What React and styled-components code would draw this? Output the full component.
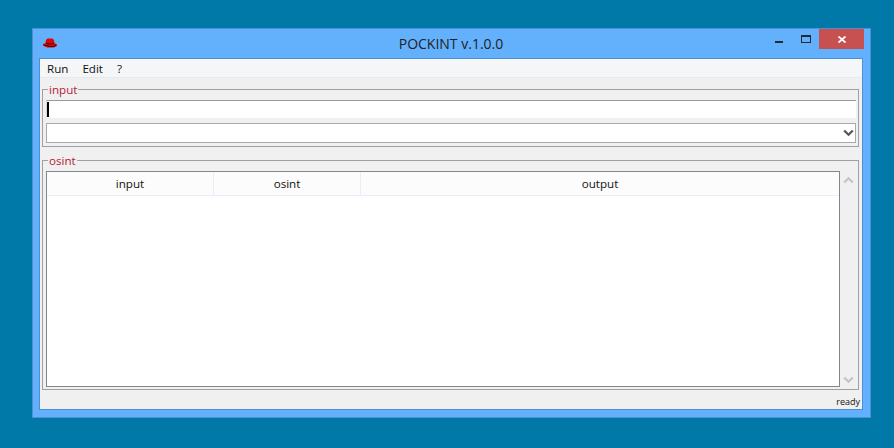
import styled, { createGlobalStyle } from "styled-components";

const Global = createGlobalStyle`
    html, body {
        margin: 0;
        padding: 0;
        width: 894px;
        height: 448px;
        overflow: hidden;
        background: #0078a8;
    }
`;

const UI_FONT = `"Open Sans", "Noto Sans", sans-serif`;

const columns = [
    { label: "input", width: 167 },
    { label: "osint", width: 147 },
    { label: "output", width: 478 },
];

export default function App() {
    return (
        <Desktop>
            <Global />
            <Window>
                <TitleBar>
                    <HatIcon />
                    <Title>POCKINT v.1.0.0</Title>
                    <Controls>
                        <MinimizeButton />
                        <MaximizeButton />
                        <CloseButton>
                            <svg width="8" height="7" viewBox="0 0 8 7">
                                <path d="M0.5 0.5 L7.5 6.5 M7.5 0.5 L0.5 6.5" stroke="#fff" strokeWidth="1.8" />
                            </svg>
                        </CloseButton>
                    </Controls>
                </TitleBar>
                <Client>
                    <MenuBar>
                        <MenuItem>Run</MenuItem>
                        <MenuItem>Edit</MenuItem>
                        <MenuItem>?</MenuItem>
                    </MenuBar>
                    <Body>
                        <InputGroup>
                            <GroupLabel>input</GroupLabel>
                            <TextField>
                                <Caret />
                            </TextField>
                            <Combo>
                                <Chevron $color="#555555" $down />
                            </Combo>
                        </InputGroup>
                        <OsintGroup>
                            <GroupLabel>osint</GroupLabel>
                            <TableRow>
                                <Table>
                                    <HeaderRow>
                                        {columns.map((c) => (
                                            <HeaderCell key={c.label} $width={c.width}>{c.label}</HeaderCell>
                                        ))}
                                    </HeaderRow>
                                </Table>
                                <ScrollBar>
                                    <Chevron $color="#c4c4c4" />
                                    <Chevron $color="#c4c4c4" $down />
                                </ScrollBar>
                            </TableRow>
                        </OsintGroup>
                    </Body>
                    <StatusBar>ready</StatusBar>
                </Client>
            </Window>
        </Desktop>
    );
}

function HatIcon() {
    return (
        <HatSvg width="14" height="10" viewBox="0 0 14 10">
            <path d="M4.5 0.5 H9.5 L11 2 L11.5 5 L14 6.5 V8 L11 9.5 H4 L0 7.5 V6 L2.5 5 L3 2 Z" fill="#d80808" />
            <path d="M3 4.5 L5 6 H9 L10.5 5 M1 7.5 L4 7.5 L6 8.5 H10 L13 7" fill="none" stroke="#4a0404" strokeWidth="1" />
        </HatSvg>
    );
}

function Chevron({ $color, $down }) {
    return (
        <svg width="11" height="8" viewBox="0 0 11 8">
            <path
                d={$down ? "M1.2 1.5 L5.5 5.8 L9.8 1.5" : "M1.2 6.5 L5.5 2.2 L9.8 6.5"}
                fill="none"
                stroke={$color}
                strokeWidth="2.2"
            />
        </svg>
    );
}

const Desktop = styled.div`
    width: 894px;
    height: 448px;
    padding: 28px 0 0 32px;
    box-sizing: border-box;
    background: #0078a8;
`;

const Window = styled.div`
    width: 839px;
    height: 390px;
    box-sizing: border-box;
    display: flex;
    flex-direction: column;
    background: #63b1fd;
    border: 1px solid #4d8fd0;
    padding: 0 7px 7px 6px;
`;

const TitleBar = styled.div`
    height: 29px;
    flex: none;
    display: flex;
    align-items: center;
    justify-content: center;
    position: relative;
`;

const HatSvg = styled.svg`
    position: absolute;
    left: 4px;
    top: 9px;
`;

const Title = styled.div`
    font-family: ${UI_FONT};
    font-size: 14px;
    color: #222222;
`;

const Controls = styled.div`
    position: absolute;
    right: -1px;
    top: 0;
    display: flex;
    align-items: flex-start;
`;

const MinimizeButton = styled.div`
    width: 8px;
    height: 2px;
    margin: 12px 18px 0 0;
    background: #1f2a36;
`;

const MaximizeButton = styled.div`
    width: 8px;
    height: 5px;
    box-sizing: content-box;
    margin: 6px 8px 0 0;
    border: 1px solid #1f2a36;
    border-top-width: 2px;
`;

const CloseButton = styled.div`
    width: 45px;
    height: 20px;
    background: #c75050;
    display: flex;
    align-items: center;
    justify-content: center;
`;

const Client = styled.div`
    flex: 1;
    min-height: 0;
    display: flex;
    flex-direction: column;
    background: #f0f0f0;
    border: 1px solid #4d8fd0;
`;

const MenuBar = styled.div`
    height: 19px;
    box-sizing: border-box;
    flex: none;
    display: flex;
    align-items: center;
    gap: 14px;
    padding: 1px 0 0 7px;
    background: #f5f6f7;
    border-bottom: 1px solid #e8e9ea;
    font-family: ${UI_FONT};
    font-size: 11.6px;
    color: #111111;
`;

const MenuItem = styled.span`
    line-height: 18px;
`;

const Body = styled.div`
    flex: 1;
    min-height: 0;
    display: flex;
    flex-direction: column;
    padding: 11px 3px 0 2px;
    gap: 13px;
`;

const Group = styled.div`
    position: relative;
    box-sizing: border-box;
    border: 1px solid #a0a0a0;
    padding: 10px 2px 2px 3px;
    display: flex;
    flex-direction: column;
`;

const InputGroup = styled(Group)`
    height: 58px;
    gap: 5px;
`;

const OsintGroup = styled(Group)`
    height: 230px;
`;

const GroupLabel = styled.span`
    position: absolute;
    left: 5px;
    top: -7px;
    padding: 0 1px;
    background: #f0f0f0;
    font-family: ${UI_FONT};
    font-size: 11.6px;
    line-height: 13px;
    color: #b52038;
`;

const TextField = styled.div`
    height: 18px;
    box-sizing: border-box;
    flex: none;
    display: flex;
    align-items: center;
    background: #ffffff;
    border-top: 1px solid #9a9a9a;
    border-left: 1px solid #d8d8d8;
`;

const Caret = styled.div`
    width: 2px;
    height: 15px;
    background: #000000;
`;

const Combo = styled.div`
    height: 20px;
    box-sizing: border-box;
    flex: none;
    display: flex;
    align-items: center;
    justify-content: flex-end;
    padding-right: 1px;
    background: #ffffff;
    border: 1px solid #a9a9a9;
`;

const TableRow = styled.div`
    flex: 1;
    min-height: 0;
    display: flex;
`;

const Table = styled.div`
    width: 794px;
    box-sizing: border-box;
    background: #ffffff;
    border: 1px solid #82878f;
`;

const HeaderRow = styled.div`
    height: 24px;
    display: flex;
    box-sizing: border-box;
    background: #fcfcfc;
    border-bottom: 1px solid #e6eff9;
`;

const HeaderCell = styled.div`
    width: ${(p) => p.$width}px;
    box-sizing: border-box;
    flex: none;
    display: flex;
    align-items: center;
    justify-content: center;
    border-right: 1px solid #e6eff9;
    font-family: ${UI_FONT};
    font-size: 11.6px;
    color: #111111;

    &:last-child {
        border-right: none;
    }
`;

const ScrollBar = styled.div`
    flex: 1;
    display: flex;
    flex-direction: column;
    align-items: center;
    justify-content: space-between;
    padding: 5px 0 3px 0;
`;

const StatusBar = styled.div`
    height: 19px;
    flex: none;
    display: flex;
    align-items: center;
    justify-content: flex-end;
    padding: 3px 2px 0 0;
    box-sizing: border-box;
    font-family: ${UI_FONT};
    font-size: 9px;
    color: #111111;
`;
